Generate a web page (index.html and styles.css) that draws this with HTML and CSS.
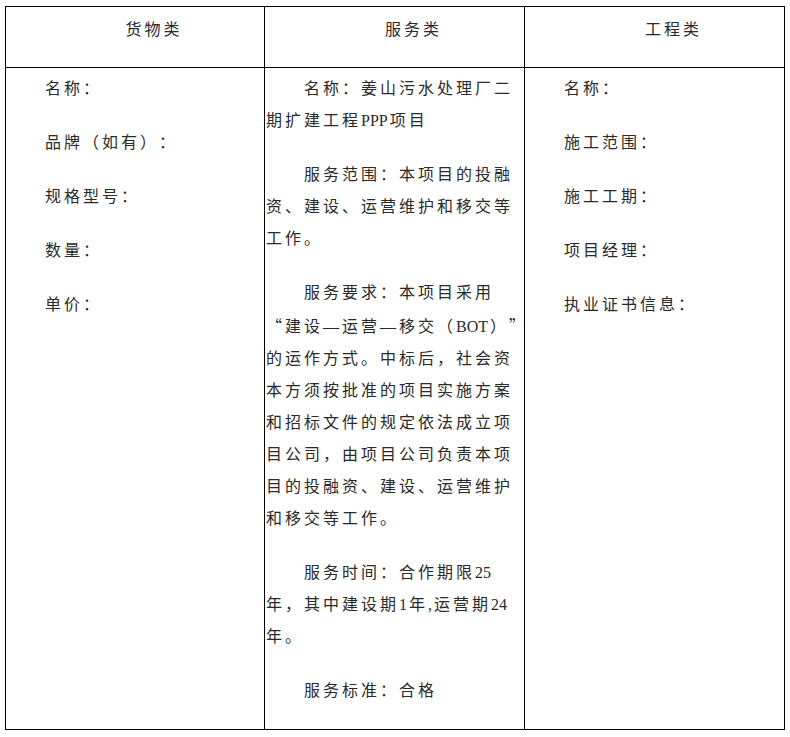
FILE: index.html
```html
<!DOCTYPE html>
<html lang="zh-CN">
<head>
<meta charset="utf-8">
<title>采购需求</title>
<link rel="stylesheet" href="styles.css">
</head>
<body>
<table class="grid">
  <colgroup>
    <col class="c1"><col class="c2"><col class="c3">
  </colgroup>
  <thead>
    <tr>
      <th>货物类</th>
      <th>服务类</th>
      <th>工程类</th>
    </tr>
  </thead>
  <tbody>
    <tr>
      <td>
        <p>名称：</p>
        <p>品牌（如有）：</p>
        <p>规格型号：</p>
        <p>数量：</p>
        <p>单价：</p>
      </td>
      <td class="mid">
        <p>名称：姜山污水处理厂二<br>期扩建工程<span class="lat">PPP</span>项目</p>
        <p>服务范围：本项目的投融<br>资、建设、运营维护和移交等<br>工作。</p>
        <p>服务要求：本项目采用<br><span class="q">“</span>建设—运营—移交（<span class="lat">BOT</span>）<span class="q">”</span><br>的运作方式。中标后，社会资<br>本方须按批准的项目实施方案<br>和招标文件的规定依法成立项<br>目公司，由项目公司负责本项<br>目的投融资、建设、运营维护<br>和移交等工作。</p>
        <p>服务时间：合作期限<span class="lat">25</span><br>年，其中建设期<span class="lat">1</span>年<span class="lat">,</span>运营期<span class="lat">24</span><br>年。</p>
        <p>服务标准：合格</p>
      </td>
      <td>
        <p>名称：</p>
        <p>施工范围：</p>
        <p>施工工期：</p>
        <p>项目经理：</p>
        <p>执业证书信息：</p>
      </td>
    </tr>
  </tbody>
</table>
</body>
</html>
```

FILE: styles.css
```css
html, body {
  margin: 0;
  padding: 0;
  background: #ffffff;
}

body {
  padding: 6px 0 0 5px;
  font-family: "Liberation Serif", "Noto Sans CJK SC", serif;
  font-size: 16px;
  color: #2a2a2a;
  text-spacing-trim: space-all;
}

.grid {
  border-collapse: collapse;
  table-layout: fixed;
  width: 780px;
}

.c1 { width: 259px; }
.c2 { width: 260px; }
.c3 { width: 260px; }

.grid th,
.grid td {
  border: 1px solid #000000;
  vertical-align: top;
  padding: 0 1px;
  font-weight: normal;
  line-height: 32px;
  letter-spacing: 3px;
  white-space: nowrap;
}

.grid th {
  height: 53px;
  padding-top: 7px;
  text-align: center;
  text-indent: 38px;
}

.grid td {
  height: 654px;
  padding-top: 5px;
}

.grid p {
  margin: 0 0 22px 0;
  text-indent: 38px;
}

.lat {
  letter-spacing: 0;
  margin-right: 2px;
}

.q {
  font-family: "Noto Sans CJK SC", sans-serif;
}
```
